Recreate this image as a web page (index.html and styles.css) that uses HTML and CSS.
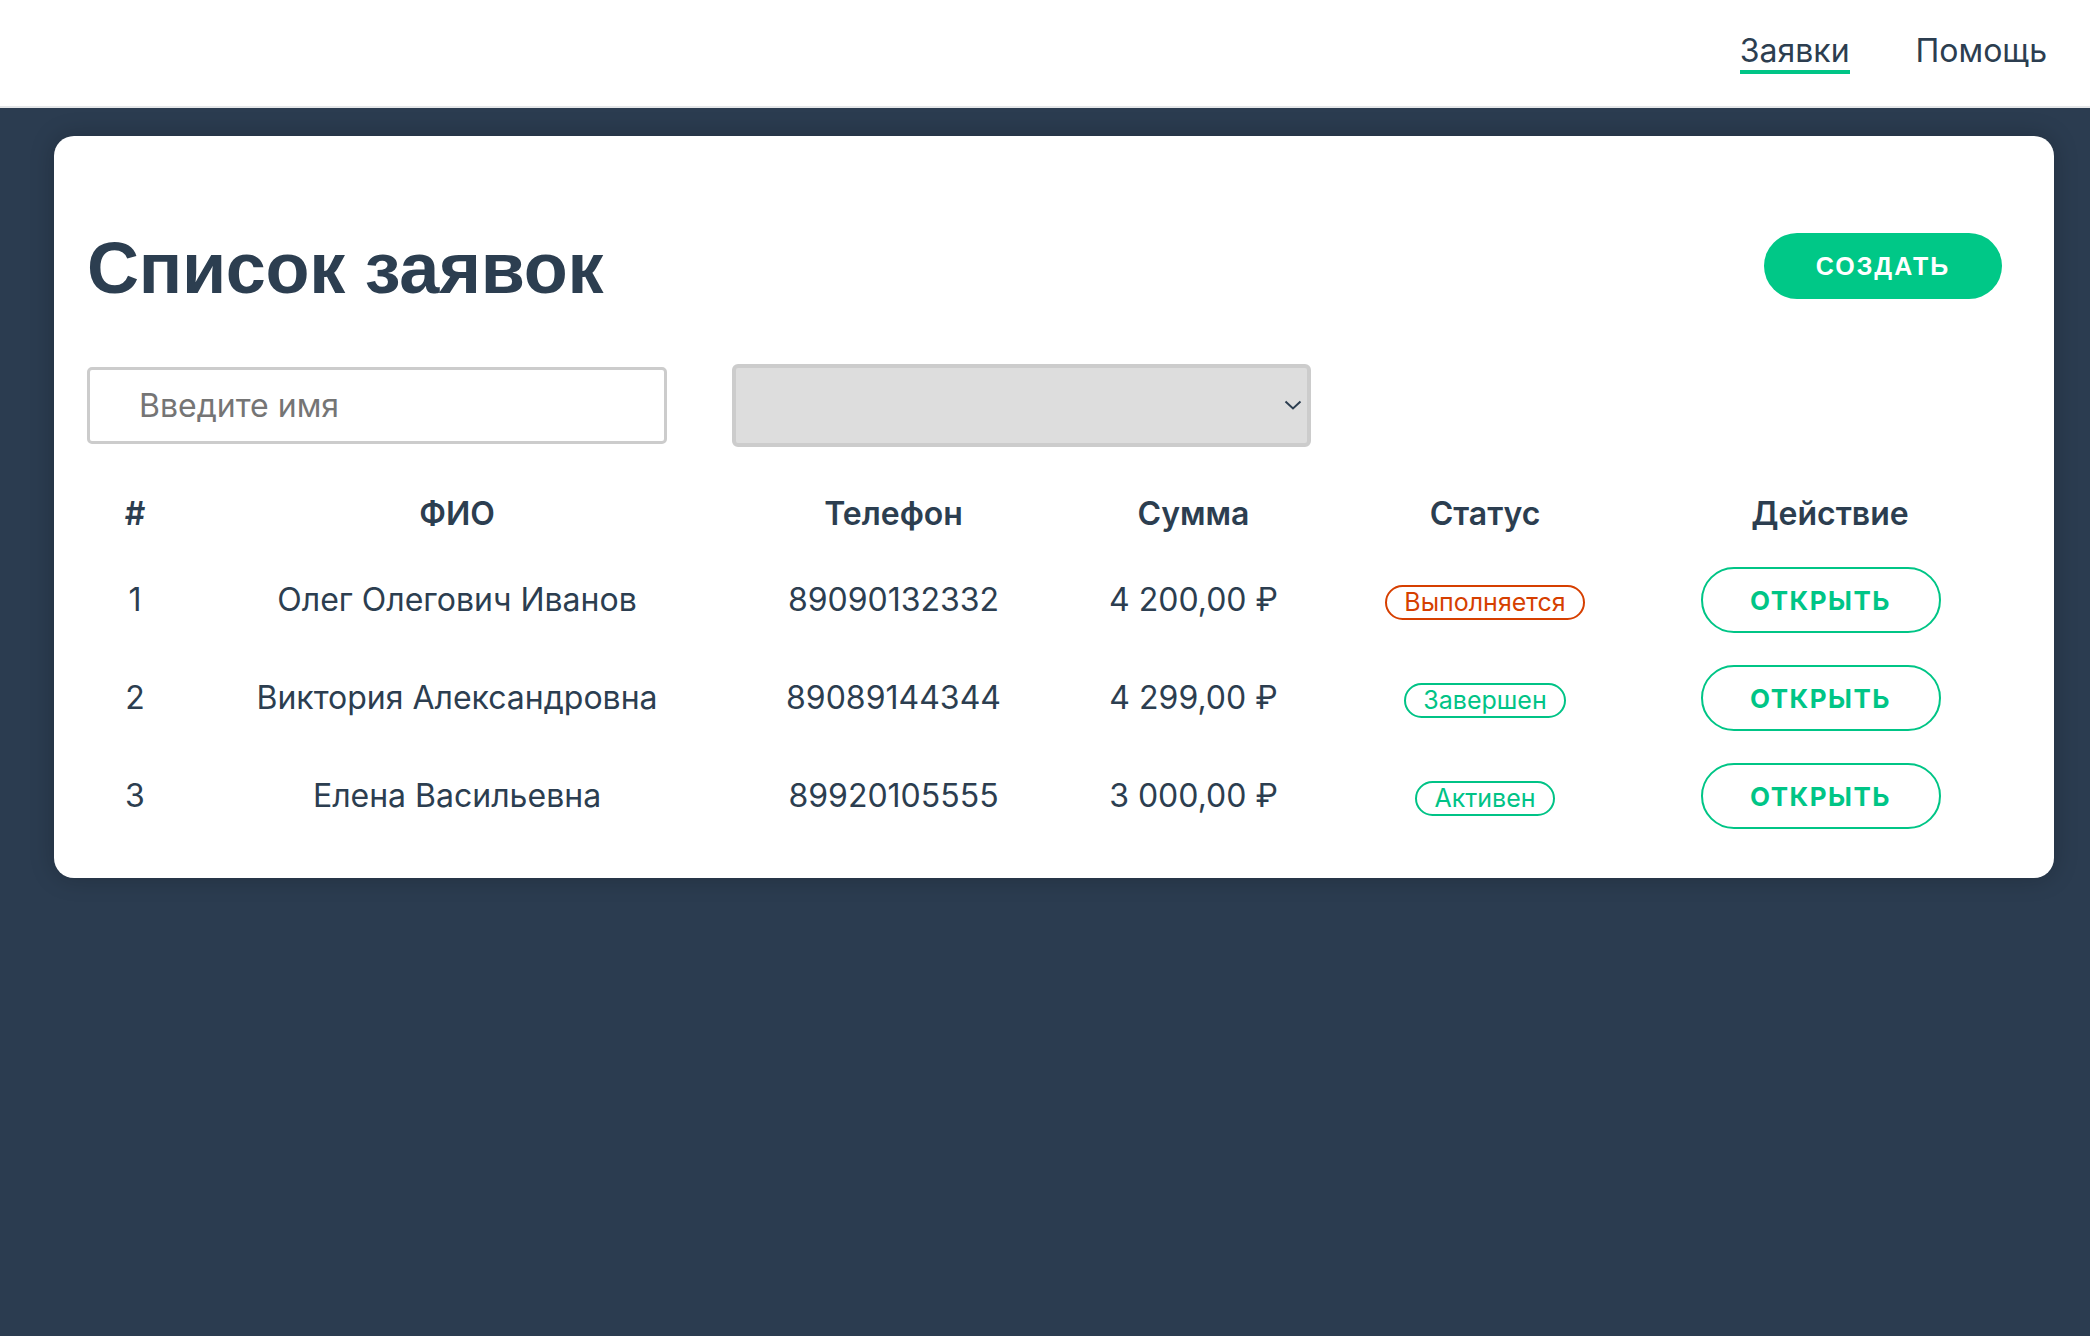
FILE: index.html
```html
<!DOCTYPE html>
<html lang="ru">
<head>
<meta charset="utf-8">
<title>Список заявок</title>
<link rel="stylesheet" href="styles.css">
</head>
<body>
<header class="topbar">
  <nav class="nav">
    <a class="nav-link active" href="#">Заявки</a>
    <a class="nav-link" href="#">Помощь</a>
  </nav>
</header>
<main class="card">
  <div class="title-row">
    <h1 class="title">Список заявок</h1>
    <button class="btn-create">СОЗДАТЬ</button>
  </div>
  <div class="filters">
    <input class="name-input" type="text" placeholder="Введите имя">
    <div class="select-wrap">
      <select class="status-select"><option></option></select>
      <svg class="chevron" width="18" height="10" viewBox="0 0 18 10"><path d="M1.5 1.5 L9 8.5 L16.5 1.5" fill="none" stroke="#2c3e50" stroke-width="2"/></svg>
    </div>
  </div>
  <table class="orders">
    <colgroup>
      <col class="c-num"><col class="c-name"><col class="c-phone"><col class="c-sum"><col class="c-status"><col class="c-action">
    </colgroup>
    <thead>
      <tr><th>#</th><th>ФИО</th><th>Телефон</th><th>Сумма</th><th>Статус</th><th>Действие</th></tr>
    </thead>
    <tbody>
      <tr>
        <td>1</td><td>Олег Олегович Иванов</td><td>89090132332</td><td>4 200,00 ₽</td>
        <td><span class="badge badge-red">Выполняется</span></td>
        <td><button class="btn-open">ОТКРЫТЬ</button></td>
      </tr>
      <tr>
        <td>2</td><td>Виктория Александровна</td><td>89089144344</td><td>4 299,00 ₽</td>
        <td><span class="badge badge-green">Завершен</span></td>
        <td><button class="btn-open">ОТКРЫТЬ</button></td>
      </tr>
      <tr>
        <td>3</td><td>Елена Васильевна</td><td>89920105555</td><td>3 000,00 ₽</td>
        <td><span class="badge badge-green">Активен</span></td>
        <td><button class="btn-open">ОТКРЫТЬ</button></td>
      </tr>
    </tbody>
  </table>
</main>
</body>
</html>
```

FILE: styles.css
```css
html, body {
  margin: 0;
  padding: 0;
}
body {
  background: #2b3c50;
  min-height: 100vh;
  font-family: "Inter", "Noto Sans", sans-serif;
  color: #2c3e50;
}
.topbar {
  background: #ffffff;
  border-bottom: 2px solid #e4e6e8;
  display: flex;
  justify-content: flex-end;
  align-items: flex-start;
  padding: 31px 43px 0 0;
  box-sizing: content-box;
  height: 75px;
}
.nav {
  display: flex;
  gap: 66px;
}
.nav-link {
  display: block;
  font-size: 32px;
  line-height: 39px;
  color: #2c3e50;
  text-decoration: none;
  border-bottom: 4px solid transparent;
}
.nav-link.active {
  border-bottom-color: #00c586;
}
.card {
  display: block;
  background: #ffffff;
  margin: 28px 36px 0 54px;
  padding: 90px 33px 33px 33px;
  border-radius: 20px;
  box-shadow: 0 0 24px rgba(0, 0, 0, 0.22);
}
.title-row {
  display: flex;
  justify-content: space-between;
  align-items: center;
}
.title {
  margin: 0;
  font-family: "Liberation Sans", Arial, sans-serif;
  font-weight: 700;
  font-size: 72px;
  line-height: 84px;
  letter-spacing: -0.3px;
  color: #2c3e50;
}
.btn-create {
  width: 238px;
  height: 66px;
  margin-right: 19px;
  margin-bottom: 4px;
  border: none;
  border-radius: 33px;
  background: #00c887;
  color: #ffffff;
  font-family: "Liberation Sans", Arial, sans-serif;
  font-weight: 700;
  font-size: 25px;
  letter-spacing: 2px;
  padding: 0;
  cursor: pointer;
}
.filters {
  display: flex;
  align-items: center;
  gap: 65px;
  margin-top: 54px;
}
.name-input {
  width: 580px;
  height: 77px;
  box-sizing: border-box;
  border: 3px solid #cccccc;
  border-radius: 5px;
  padding: 0 0 0 49px;
  font-family: "Inter", sans-serif;
  font-size: 32px;
  color: #2c3e50;
  outline: none;
}
.name-input::placeholder {
  color: #757575;
}
.select-wrap {
  position: relative;
  width: 579px;
  height: 83px;
}
.status-select {
  appearance: none;
  -webkit-appearance: none;
  width: 100%;
  height: 100%;
  box-sizing: border-box;
  background: #dddddd;
  border: 4px solid #cccccc;
  border-radius: 6px;
  font-size: 32px;
  font-family: "Inter", sans-serif;
}
.chevron {
  position: absolute;
  right: 9px;
  top: 36px;
  pointer-events: none;
}
.orders {
  width: 100%;
  margin-top: 30px;
  border-collapse: collapse;
  table-layout: fixed;
}
.c-num { width: 96px; }
.c-name { width: 548px; }
.c-phone { width: 325px; }
.c-sum { width: 275px; }
.c-status { width: 308px; }
.c-action { width: 382px; }
.orders th {
  font-weight: 600;
  font-size: 32px;
  line-height: 40px;
  padding: 17px 0;
  text-align: center;
  color: #2c3e50;
}
.orders td {
  font-size: 32px;
  line-height: 40px;
  padding: 16px 0;
  text-align: center;
  vertical-align: middle;
  color: #2c3e50;
}
.badge {
  display: inline-block;
  font-size: 25px;
  line-height: 31px;
  padding: 0 17px;
  border: 2px solid;
  border-radius: 20px;
  vertical-align: middle;
}
.badge-red {
  color: #d63f00;
  border-color: #d63f00;
}
.badge-green {
  color: #00c386;
  border-color: #00c386;
}
.btn-open {
  width: 240px;
  height: 66px;
  margin-right: 19px;
  background: #ffffff;
  border: 2px solid #00c586;
  border-radius: 33px;
  color: #00c586;
  font-family: "Inter", sans-serif;
  font-weight: 700;
  font-size: 26px;
  letter-spacing: 1.5px;
  padding: 0;
  vertical-align: middle;
  cursor: pointer;
}
```
